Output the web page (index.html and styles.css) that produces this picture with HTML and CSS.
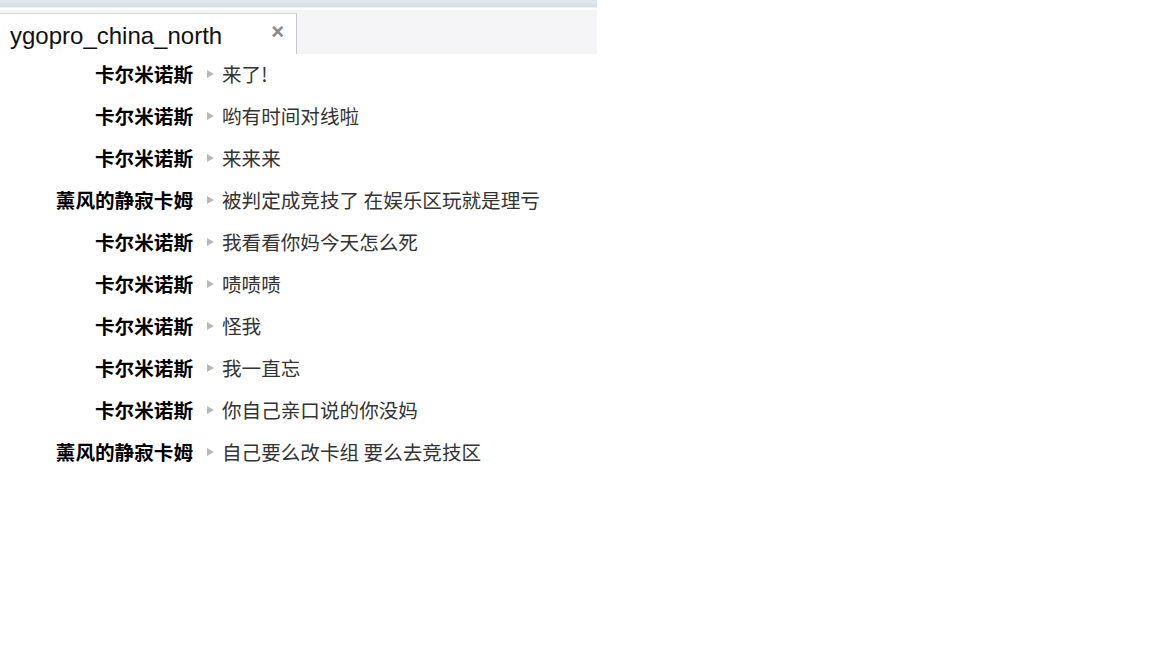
FILE: index.html
```html
<!DOCTYPE html>
<html lang="zh-CN">
<head>
  <meta charset="UTF-8" />
  <title>ygopro_china_north</title>
  <link rel="stylesheet" href="styles.css">
</head>
<body>

  <div class="panel">
    <div class="topbar"></div>
    <div class="tabbar">
      <div class="tab">
        <span class="tab-title">ygopro_china_north</span>
        <span class="tab-close">&times;</span>
      </div>
    </div>
  </div>

  <div class="chat">
    <div class="line"><span class="name">卡尔米诺斯</span><span class="arrow"></span><span class="msg">来了!</span></div>
    <div class="line"><span class="name">卡尔米诺斯</span><span class="arrow"></span><span class="msg">哟有时间对线啦</span></div>
    <div class="line"><span class="name">卡尔米诺斯</span><span class="arrow"></span><span class="msg">来来来</span></div>
    <div class="line"><span class="name">薰风的静寂卡姆</span><span class="arrow"></span><span class="msg">被判定成竞技了 在娱乐区玩就是理亏</span></div>
    <div class="line"><span class="name">卡尔米诺斯</span><span class="arrow"></span><span class="msg">我看看你妈今天怎么死</span></div>
    <div class="line"><span class="name">卡尔米诺斯</span><span class="arrow"></span><span class="msg">啧啧啧</span></div>
    <div class="line"><span class="name">卡尔米诺斯</span><span class="arrow"></span><span class="msg">怪我</span></div>
    <div class="line"><span class="name">卡尔米诺斯</span><span class="arrow"></span><span class="msg">我一直忘</span></div>
    <div class="line"><span class="name">卡尔米诺斯</span><span class="arrow"></span><span class="msg">你自己亲口说的你没妈</span></div>
    <div class="line"><span class="name">薰风的静寂卡姆</span><span class="arrow"></span><span class="msg">自己要么改卡组 要么去竞技区</span></div>
  </div>

</body>
</html>
```

FILE: styles.css
```css
body {
  margin: 0;
  background: #fff;
  font-family: "Noto Sans CJK SC", "Liberation Sans", sans-serif;
}

.panel {
  width: 597px;
}

.topbar {
  height: 7px;
  background: linear-gradient(to bottom, #e4e8ee, #d6dde6);
  border-bottom: 1px solid #eef0f3;
}

.tabbar {
  height: 44px;
  padding-top: 2px;
  display: flex;
  align-items: flex-end;
  background: linear-gradient(to bottom, #fff 0, #fff 2px, #f5f5f7 2px);
}

.tab {
  width: 297px;
  height: 41px;
  box-sizing: border-box;
  background: #fff;
  border-top: 1px solid #d8d8d8;
  border-right: 1px solid #c8c8c8;
  display: flex;
  align-items: center;
  justify-content: space-between;
  padding: 4px 12px 0 10px;
}

.tab-title {
  font-family: "Liberation Sans", Arial, sans-serif;
  font-size: 24px;
  color: #111;
}

.tab-close {
  font-family: "Liberation Sans", Arial, sans-serif;
  font-size: 22px;
  font-weight: bold;
  color: #8a8a8a;
  margin-top: -8px;
}

.chat {
  margin-top: -2px;
}

.line {
  display: flex;
  align-items: center;
  height: 42px;
}

.name {
  width: 193px;
  text-align: right;
  font-size: 19.6px;
  font-weight: bold;
  color: #000;
}

.arrow {
  width: 0;
  height: 0;
  margin: 1px 8px 0 14px;
  border-top: 4px solid transparent;
  border-bottom: 4px solid transparent;
  border-left: 7px solid #b8b8b8;
}

.msg {
  font-size: 19.6px;
  color: #333;
}
```
